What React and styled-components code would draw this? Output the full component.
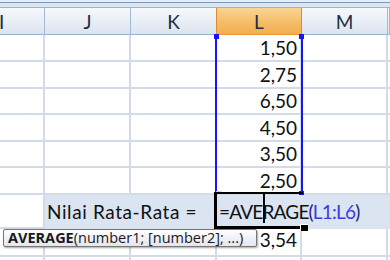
import React from 'react';
import styled, { createGlobalStyle } from 'styled-components';

const GlobalStyle = createGlobalStyle`
  html, body { margin: 0; padding: 0; background: #fff; }
  body { font-family: Lato, "Open Sans", sans-serif; overflow: hidden; }
`;

const COLS = '45px 86px 86px 85px 86px 1fr';
const GRID = '#d3dae8';
const FILL = '#dbe5f1';

const Sheet = styled.div`
  position: relative;
  width: 390px;
  height: 260px;
  overflow: hidden;
  background: #fff;
`;

const TopEdge = styled.div`
  height: 8px;
  background: linear-gradient(
    to bottom,
    #e9eef5 0, #e9eef5 2px,
    #7d98bb 2px, #7d98bb 3px,
    #dce5f0 3px, #dce5f0 7px,
    #9cb3cd 7px, #9cb3cd 8px
  );
`;

const HeaderRow = styled.div`
  display: grid;
  grid-template-columns: ${COLS};
  height: 27px;
`;

const HeaderCell = styled.div`
  display: flex;
  align-items: center;
  justify-content: ${p => (p.$edge ? 'flex-start' : 'center')};
  box-sizing: border-box;
  padding-top: 1px;
  border-right: 1px solid ${p => (p.$active ? '#e48a2f' : '#a3b8d1')};
  border-bottom: 1px solid ${p => (p.$active ? '#ee9434' : '#9cb3cd')};
  box-shadow: ${p => (p.$active ? '-1px 0 0 #e48a2f' : 'none')};
  background: ${p =>
    p.$active
      ? 'linear-gradient(#f9d596, #f5bd67 55%, #f2af4c)'
      : 'linear-gradient(#f5f8fc, #eaeff6 50%, #dbe3ee)'};
  font-size: 19px;
  color: #1e2d45;
  overflow: hidden;
`;

const EdgeLetter = styled.span`
  margin-left: -1px;
`;

const Row = styled.div`
  display: grid;
  grid-template-columns: ${COLS};
  height: ${p => p.$h}px;
`;

const Cell = styled.div`
  position: relative;
  z-index: ${p => (p.$over ? 1 : 0)};
  box-sizing: border-box;
  display: flex;
  align-items: flex-end;
  justify-content: ${p => (p.$right ? 'flex-end' : 'flex-start')};
  padding: 0 ${p => (p.$right ? 3 : 2)}px ${p => p.$pb}px ${p => (p.$right ? 0 : 2)}px;
  border-right: 2px solid ${p => p.$fill || GRID};
  border-bottom: 2px solid ${p => p.$fill || GRID};
  background: ${p => p.$fill || '#fff'};
  font-size: 19px;
  line-height: 1;
  letter-spacing: ${p => p.$ls || 0}px;
  color: #111;
  white-space: nowrap;
`;

const Ref = styled.span`
  color: #3a3ae6;
`;

const Paren = styled.span`
  color: #23237a;
`;

const Caret = styled.span`
  position: relative;
  display: inline-block;
  width: 0;
  height: 1em;
  &::after {
    content: '';
    position: absolute;
    left: 0;
    top: -8px;
    width: 2px;
    height: 29px;
    background: #000;
  }
`;

const RangeBox = styled.div`
  position: absolute;
  left: 215px;
  top: 34px;
  width: 88px;
  height: 161px;
  box-sizing: border-box;
  border-left: 2px solid #1414ff;
  border-right: 2px solid #1414ff;
  z-index: 2;
  pointer-events: none;
`;

const Handle = styled.span`
  position: absolute;
  width: ${p => p.$w}px;
  height: ${p => p.$h}px;
  background: ${p => p.$color};
`;

const ActiveCell = styled.div`
  position: absolute;
  left: 214px;
  top: 192px;
  width: 89px;
  height: 37px;
  box-sizing: border-box;
  border-left: 3px solid #000;
  border-top: 2px solid #000;
  border-bottom: 3px solid #000;
  z-index: 3;
  pointer-events: none;
`;

const FillHandle = styled.span`
  position: absolute;
  right: -5px;
  bottom: -5px;
  width: 7px;
  height: 6px;
  background: #000;
  border: 1px solid #fff;
  border-right: none;
  border-bottom: none;
`;

const Tooltip = styled.div`
  position: absolute;
  left: 3px;
  top: 229px;
  width: 254px;
  height: 18px;
  box-sizing: border-box;
  display: flex;
  align-items: center;
  padding-left: 4px;
  border: 1px solid #767676;
  border-radius: 2px;
  background: linear-gradient(#ffffff, #e4e5ee);
  box-shadow: 1px 1px 2px rgba(0, 0, 0, 0.35);
  font-family: "Open Sans", "Noto Sans", sans-serif;
  font-size: 14.5px;
  line-height: 1;
  color: #1a1a1a;
  white-space: nowrap;
  z-index: 4;
`;

const FnName = styled.b`
  font-weight: 700;
`;

const values = [
  { v: '1,50', h: 27 },
  { v: '2,75', h: 27 },
  { v: '6,50', h: 26 },
  { v: '4,50', h: 27 },
  { v: '3,50', h: 26 },
  { v: '2,50', h: 27 },
];

export default function App() {
  return (
    <>
      <GlobalStyle />
      <Sheet>
        <TopEdge />
        <HeaderRow>
          <HeaderCell $edge><EdgeLetter>I</EdgeLetter></HeaderCell>
          <HeaderCell>J</HeaderCell>
          <HeaderCell>K</HeaderCell>
          <HeaderCell $active>L</HeaderCell>
          <HeaderCell>M</HeaderCell>
          <HeaderCell />
        </HeaderRow>

        {values.map(r => (
          <Row key={r.v} $h={r.h}>
            <Cell $pb={3} />
            <Cell $pb={3} />
            <Cell $pb={3} />
            <Cell $pb={3} $right>{r.v}</Cell>
            <Cell $pb={3} />
            <Cell $pb={3} />
          </Row>
        ))}

        <Row $h={34}>
          <Cell $pb={6} />
          <Cell $pb={6} $fill={FILL} $over $ls={0.6}>Nilai Rata-Rata =</Cell>
          <Cell $pb={6} $fill={FILL} />
          <Cell $pb={6} $fill={FILL} $over $ls={-0.8}>
            =AVE<Caret />RAGE<Paren>(</Paren><Ref>L1:L6</Ref><Paren>)</Paren>
          </Cell>
          <Cell $pb={6} $fill={FILL} />
          <Cell $pb={6} $fill={FILL} />
        </Row>

        <Row $h={28}>
          <Cell $pb={6} />
          <Cell $pb={6} />
          <Cell $pb={6} />
          <Cell $pb={6} $right>3,54</Cell>
          <Cell $pb={6} />
          <Cell $pb={6} />
        </Row>

        <Row $h={27}>
          <Cell $pb={3} />
          <Cell $pb={3} />
          <Cell $pb={3} />
          <Cell $pb={3} />
          <Cell $pb={3} />
          <Cell $pb={3} />
        </Row>

        <RangeBox>
          <Handle $w={5} $h={5} $color="#1414ff" style={{ left: -3, top: 0 }} />
          <Handle $w={5} $h={5} $color="#1414ff" style={{ right: -3, top: 0 }} />
          <Handle $w={5} $h={4} $color="#1414ff" style={{ right: -3, bottom: 0 }} />
          <Handle $w={5} $h={3} $color="#e8e03a" style={{ left: -1, bottom: 1 }} />
        </RangeBox>

        <ActiveCell>
          <FillHandle />
        </ActiveCell>

        <Tooltip>
          <FnName>AVERAGE</FnName>(number1; [number2]; ...)
        </Tooltip>
      </Sheet>
    </>
  );
}
